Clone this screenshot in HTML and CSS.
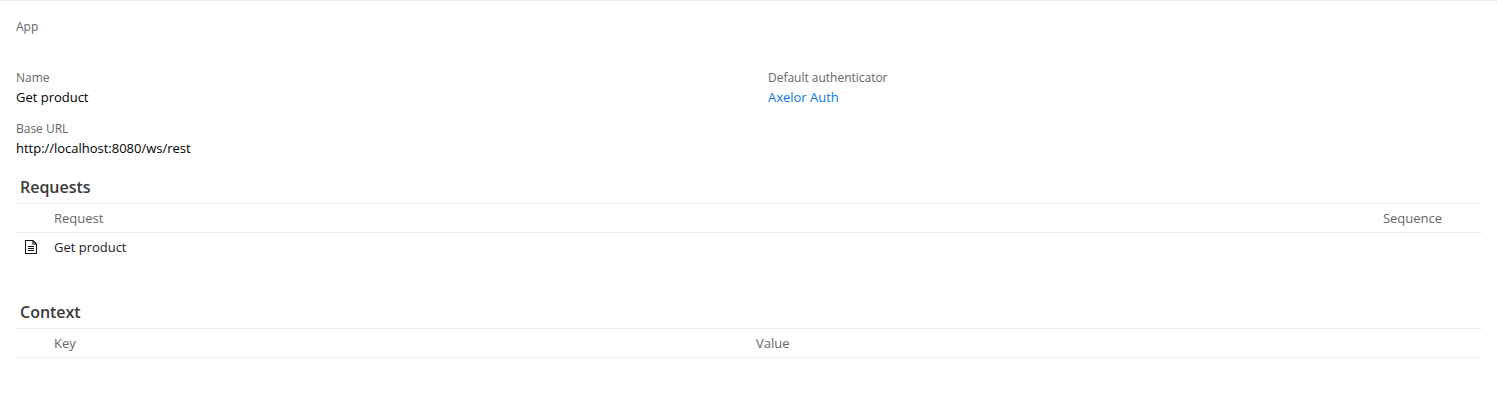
FILE: index.html
```
<!DOCTYPE html>
<html lang="en">
<head>
<meta charset="utf-8">
<title>Get product</title>
<link rel="stylesheet" href="styles.css">
</head>
<body>
<main class="form">
  <div class="field app"><span class="label">App</span></div>
  <div class="row">
    <div class="field"><span class="label">Name</span><span class="value">Get product</span></div>
    <div class="field"><span class="label">Default authenticator</span><a class="value link">Axelor Auth</a></div>
  </div>
  <div class="field base"><span class="label">Base URL</span><span class="value">http://localhost:8080/ws/rest</span></div>
  <section class="panel requests">
    <h2 class="title">Requests</h2>
    <div class="grid head"><span class="cell">Request</span><span class="cell seq">Sequence</span></div>
    <div class="grid item">
      <svg class="icon" width="12" height="14" viewBox="0 0 12 14"><path fill="none" stroke="#111" stroke-width="1.1" d="M8 .5H.5v13h11V4L8 .5V4h3.5M3 6.5h6M3 8.5h6M3 10.5h6"/></svg>
      <span class="cell">Get product</span>
    </div>
  </section>
  <section class="panel">
    <h2 class="title">Context</h2>
    <div class="grid head"><span class="cell">Key</span><span class="cell val">Value</span></div>
  </section>
</main>
</body>
</html>
```
FILE: styles.css
```
* { box-sizing: border-box; }
body { margin: 0; background: #eee; color: #000; font: 13px/20px "Open Sans", sans-serif; letter-spacing: -0.015px; }
.form { height: 408px; background: #fff; border-top: 1px solid #eee; border-radius: 4px 4px 0 0; padding: 16px 15px 0 16px; }
.field { display: flex; flex-direction: column; align-items: flex-start; height: 51px; }
.row { display: grid; grid-template-columns: 752px 1fr; }
.label { font-size: 12px; color: #666; }
.value { line-height: 18px; }
.link { color: #0a7be0; }
.base { height: 50px; }
.title { margin: 0; padding: 0 4px; height: 34px; font-size: 16px; line-height: 36px; font-weight: 600; color: #3a3a3a; }
.panel { height: 125px; }
.grid { display: grid; grid-template-columns: 38px 702px 1fr; height: 29px; line-height: 28px; align-items: center; color: #222; }
.item { height: 28px; }
.head { height: 30px; border: solid #eee; border-width: 1px 0; color: #666; }
.cell { grid-column: 2; }
.seq, .val { grid-column: 3; }
.seq { text-align: right; padding-right: 40px; }
.icon { margin-left: 9px; }
```
